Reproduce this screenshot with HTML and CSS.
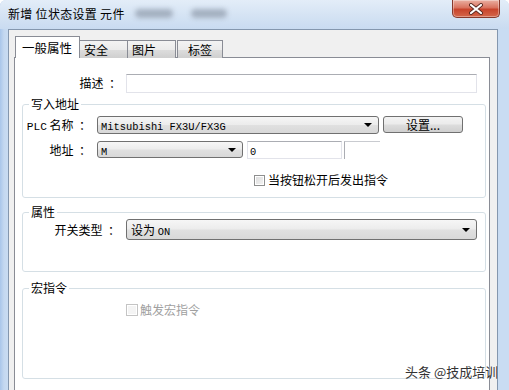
FILE: index.html
```html
<!DOCTYPE html>
<html lang="zh-CN">
<head>
  <meta charset="UTF-8">
  <title>新增 位状态设置 元件</title>
  <link rel="stylesheet" href="styles.css">
</head>
<body>

  <div class="window">
    <div class="titlebar">
      <span class="title">新增 位状态设置 元件</span>
      <span class="smudge smudge-a"></span>
      <span class="smudge smudge-b"></span>
      <span class="close">
        <svg width="16" height="12" viewBox="0 0 16 12">
          <path d="M3 2 L13 10 M13 2 L3 10" stroke="#5a2a22" stroke-width="4" stroke-linecap="round"/>
          <path d="M3 2 L13 10 M13 2 L3 10" stroke="#ffffff" stroke-width="2.2" stroke-linecap="round"/>
        </svg>
      </span>
    </div>

    <div class="client">
      <div class="tabs">
        <div class="tab active">一般属性</div>
        <div class="tab">安全</div>
        <div class="tab">图片</div>
        <div class="tab tab-last">标签</div>
      </div>

      <div class="page">
        <div class="row desc-row">
          <label class="lbl lbl-wide">描述  ：</label>
          <div class="text desc-input"></div>
        </div>

        <fieldset class="group group-addr">
          <legend>写入地址</legend>
          <div class="row">
            <label class="lbl lbl-narrow"><span class="mono mono-lbl">PLC</span> 名称  ：</label>
            <div class="combo combo-plc"><span class="mono">Mitsubishi FX3U/FX3G</span><i class="arrow"></i></div>
            <button class="btn">设置...</button>
          </div>
          <div class="row addr-row">
            <label class="lbl lbl-narrow">地址  ：</label>
            <div class="combo combo-addr"><span class="mono">M</span><i class="arrow"></i></div>
            <div class="text addr-input"><span class="mono">0</span></div>
            <div class="text addr-extra"></div>
          </div>
          <div class="check-row check-release">
            <span class="box"></span>
            <span>当按钮松开后发出指令</span>
          </div>
        </fieldset>

        <fieldset class="group group-prop">
          <legend>属性</legend>
          <div class="row">
            <label class="lbl lbl-wide2">开关类型  ：</label>
            <div class="combo combo-type"><span>设为 <span class="mono">ON</span></span><i class="arrow"></i></div>
          </div>
        </fieldset>

        <fieldset class="group group-macro">
          <legend>宏指令</legend>
          <div class="check-row check-macro disabled">
            <span class="box"></span>
            <span>触发宏指令</span>
          </div>
        </fieldset>
      </div>
    </div>

    <div class="watermark">头条 @技成培训</div>
  </div>

</body>
</html>
```

FILE: styles.css
```css
body {
  margin: 0;
  font-family: "Noto Sans CJK SC", "Liberation Sans", sans-serif;
  font-size: 12px;
  color: #000;
  background: #ffffff;
}

.window {
  position: relative;
  width: 509px;
  height: 390px;
  overflow: hidden;
  background: linear-gradient(90deg, #a9c6ea 0, #c4d8f0 4px, #c9dcf2 8px);
  border-radius: 6px 6px 0 0;
}

.titlebar {
  height: 29px;
  display: flex;
  align-items: center;
  padding-left: 8px;
  background: linear-gradient(#e3edf8, #d3e2f3 60%, #c9dbf1);
}

.title {
  line-height: 14px;
  margin-top: -2px;
  letter-spacing: 0.3px;
}

.smudge {
  height: 9px;
  border-radius: 5px;
  background: #97a3b3;
  filter: blur(2.5px);
  opacity: 0.8;
  margin-top: -2px;
}

.smudge-a {
  width: 38px;
  margin-left: 10px;
}

.smudge-b {
  width: 36px;
  margin-left: 18px;
}

.close {
  margin-left: auto;
  margin-right: 9px;
  align-self: flex-start;
  width: 48px;
  height: 18px;
  box-sizing: border-box;
  display: flex;
  align-items: center;
  justify-content: center;
  border: 1px solid #86392c;
  border-top: none;
  border-radius: 0 0 5px 5px;
  background: linear-gradient(#eab0a2, #d9735f 45%, #c8442c 55%, #d4674b);
  box-shadow: inset 0 0 0 1px rgba(255, 255, 255, 0.35);
}

.client {
  margin: 0 11px 0 8px;
  height: 361px;
  border: 1px solid #8497ae;
  border-bottom: none;
  background: #f0f0f0;
  padding: 6px 0 0 5px;
}

.tabs {
  display: flex;
  align-items: flex-end;
  height: 21px;
  padding-left: 1px;
}

.tab {
  height: 18px;
  box-sizing: border-box;
  border: 1px solid #898c95;
  border-bottom: none;
  border-left: none;
  background: linear-gradient(#f3f3f3, #ebebeb 50%, #dddddd 51%, #cfcfcf);
  line-height: 17px;
  padding-left: 4px;
  width: 48px;
  margin-bottom: -1px;
}

.tab.active {
  height: 22px;
  width: 65px;
  border-left: 1px solid #898c95;
  background: #ffffff;
  line-height: 22px;
  padding-left: 6px;
  position: relative;
  z-index: 1;
  font-size: 12.5px;
}

.tab-last {
  margin-left: 1px;
  width: 46px;
  border-left: 1px solid #898c95;
  padding-left: 10px;
}

.page {
  width: 476px;
  height: 340px;
  box-sizing: border-box;
  border: 1px solid #898c95;
  border-bottom: none;
  background: #ffffff;
  padding-top: 16px;
}

.row {
  display: flex;
  align-items: flex-start;
}

.lbl {
  text-align: right;
  line-height: 18px;
  white-space: pre;
}

.lbl-wide {
  width: 106px;
}

.lbl-narrow {
  width: 68px;
}

.lbl-wide2 {
  width: 97px;
  line-height: 21px;
}

.mono {
  font-family: "Liberation Mono", "Noto Sans CJK SC", monospace;
  font-size: 10.4px;
}

.mono-lbl {
  font-size: 11.2px;
}

.text {
  box-sizing: border-box;
  background: #ffffff;
  border: 1px solid #e2e3ea;
  border-top-color: #abadb3;
  line-height: 16px;
  padding-left: 2px;
}

.desc-input {
  margin-left: 5px;
  width: 351px;
  height: 19px;
}

.group {
  margin: 4px 0 0 7px;
  width: 464px;
  box-sizing: border-box;
  border: 1px solid #d5dfe5;
  border-radius: 3px;
  padding: 5px 0 10px 0;
  min-width: 0;
}

.group legend {
  margin-left: 6px;
  padding: 0 2px;
  line-height: 14px;
}

.combo {
  position: relative;
  box-sizing: border-box;
  margin-left: 6px;
  border: 1px solid #707070;
  border-radius: 3px;
  background: linear-gradient(#f6f6f6, #ececec 48%, #e0e0e0 52%, #d8d8d8);
  padding-left: 3px;
  line-height: 16px;
}

.arrow {
  position: absolute;
  right: 6px;
  top: 50%;
  margin-top: -2px;
  width: 0;
  height: 0;
  border-left: 4px solid transparent;
  border-right: 4px solid transparent;
  border-top: 4px solid #000;
}

.combo-plc {
  width: 282px;
  height: 18px;
}

.btn {
  margin-left: 4px;
  width: 80px;
  height: 17px;
  box-sizing: border-box;
  border: 1px solid #707070;
  border-radius: 3px;
  background: linear-gradient(#f3f3f3, #ebebeb 48%, #dddddd 52%, #cfcfcf);
  font-family: inherit;
  font-size: 12px;
  line-height: 14px;
  padding: 0;
  color: #000;
}

.addr-row {
  margin-top: 5px;
}

.combo-addr {
  width: 146px;
  height: 17px;
  line-height: 15px;
}

.addr-input {
  margin-left: 4px;
  width: 95px;
  height: 18px;
}

.addr-extra {
  margin-left: 2px;
  width: 36px;
  height: 18px;
  border-right: none;
  border-bottom: none;
  border-top-color: #c9cbd0;
  border-left-color: #abadb3;
}

.check-row {
  display: flex;
  align-items: center;
  line-height: 14px;
}

.box {
  width: 11px;
  height: 11px;
  box-sizing: border-box;
  border: 1px solid #8e8f8f;
  background: linear-gradient(135deg, #dcdcdc, #f4f4f4);
  box-shadow: inset 0 0 0 1px #ffffff;
  margin-right: 3px;
}

.check-release {
  margin-top: 14px;
  padding-left: 231px;
}

.group-prop {
  margin-top: 7px;
  padding: 0 0 31px 0;
}

.combo-type {
  width: 351px;
  height: 21px;
  line-height: 19px;
  padding-left: 4px;
}

.group-macro {
  margin-top: 9px;
  padding: 7px 0 60px 0;
}

.check-macro {
  padding-left: 103px;
  line-height: 16px;
}

.check-macro .box {
  width: 12px;
  height: 12px;
  border-color: #c4c4c4;
  background: #f4f4f4;
  margin-right: 2px;
}

.disabled {
  color: #a0a0a0;
}

.watermark {
  position: absolute;
  left: 405px;
  top: 364px;
  font-size: 13px;
  line-height: 16px;
  color: #333333;
  text-shadow: 0 0 2px #ffffff;
}
```
